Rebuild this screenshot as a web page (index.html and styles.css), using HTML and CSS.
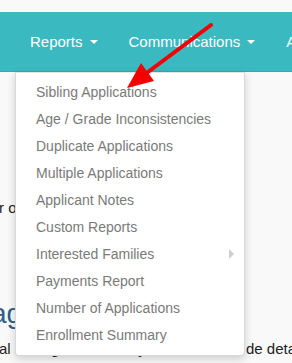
FILE: index.html
```html
<!DOCTYPE html>
<html>
<head>
<meta charset="utf-8">
<link rel="stylesheet" href="styles.css">
</head>
<body>
<div class="page">
  <nav class="navbar">
    <ul class="nav">
      <li class="nav-item">Reports <span class="caret"></span></li>
      <li class="nav-item">Communications <span class="caret"></span></li>
      <li class="nav-item">Admin</li>
    </ul>
  </nav>
  <main class="content">
    <p class="line1">r other info</p>
    <h2 class="heading">age settings</h2>
    <p class="line2"><span class="cut">al settings that allow you to inclu</span>de details</p>
    <p class="line3">in each email, including the student's details and other fields</p>
  </main>
  <ul class="dropdown">
    <li>Sibling Applications</li>
    <li>Age / Grade Inconsistencies</li>
    <li>Duplicate Applications</li>
    <li>Multiple Applications</li>
    <li>Applicant Notes</li>
    <li>Custom Reports</li>
    <li class="sub">Interested Families <span class="sub-caret"></span></li>
    <li>Payments Report</li>
    <li>Number of Applications</li>
    <li>Enrollment Summary</li>
  </ul>
  <svg class="arrow" width="292" height="363" viewBox="0 0 292 363">
    <line x1="211" y1="25" x2="148" y2="72" stroke="#f40000" stroke-width="4" stroke-linecap="round"/>
    <polygon points="127,88 141,63 154,81" fill="#f40000"/>
  </svg>
</div>
</body>
</html>
```

FILE: styles.css
```css
* { box-sizing: border-box; }
html, body {
  margin: 0;
  padding: 0;
  background: #f9f9f9;
  overflow: hidden;
}
body {
  font-family: "Liberation Sans", Arial, sans-serif;
  width: 292px;
  height: 363px;
}
.page {
  position: relative;
  width: 292px;
  height: 363px;
  padding-top: 12px;
  overflow: hidden;
}
.navbar {
  height: 60px;
  background: #3bb9c0;
  border-bottom: 1px solid #32abb1;
}
.nav {
  list-style: none;
  margin: 0;
  padding: 0 0 0 30px;
  display: flex;
  align-items: center;
  height: 59px;
  gap: 31px;
  white-space: nowrap;
}
.nav-item {
  color: #fff;
  font-size: 15px;
  display: flex;
  align-items: center;
}
.caret {
  display: inline-block;
  width: 0;
  height: 0;
  margin-left: 7px;
  border-top: 4px solid #fff;
  border-left: 4px solid transparent;
  border-right: 4px solid transparent;
}
.content {
  padding-top: 126px;
  color: #222;
  font-size: 15px;
  white-space: nowrap;
}
.content p { margin: 0; }
.line1 { line-height: 20px; margin-left: -1px !important; }
.heading {
  margin: 81px 0 0 -9px;
  font-size: 28px;
  font-weight: normal;
  color: #2f6089;
  line-height: 30px;
}
.line2 { line-height: 22px; margin-top: 9px !important; margin-left: -1px !important; }
.cut {
  display: inline-block;
  width: 247px;
  overflow: hidden;
  vertical-align: bottom;
}
.line3 { line-height: 22px; margin-top: 3px !important; }
.dropdown {
  position: absolute;
  left: 15px;
  top: 72px;
  width: 230px;
  margin: 0;
  padding: 5px 0 7px;
  list-style: none;
  background: #fff;
  border: 1px solid #d8d8d8;
  border-top-color: #e4e4e4;
  border-radius: 0 0 4px 4px;
  box-shadow: 0 3px 8px rgba(0,0,0,0.18);
}
.dropdown li {
  padding: 3.5px 20px;
  line-height: 20px;
  font-size: 14px;
  color: #7a7a7a;
  white-space: nowrap;
}
.dropdown li.sub {
  display: flex;
  align-items: center;
  justify-content: space-between;
  padding-right: 10px;
}
.sub-caret {
  width: 0;
  height: 0;
  border-left: 5px solid #cfcfcf;
  border-top: 5px solid transparent;
  border-bottom: 5px solid transparent;
}
.arrow {
  position: absolute;
  left: 0;
  top: 0;
  pointer-events: none;
}
```
